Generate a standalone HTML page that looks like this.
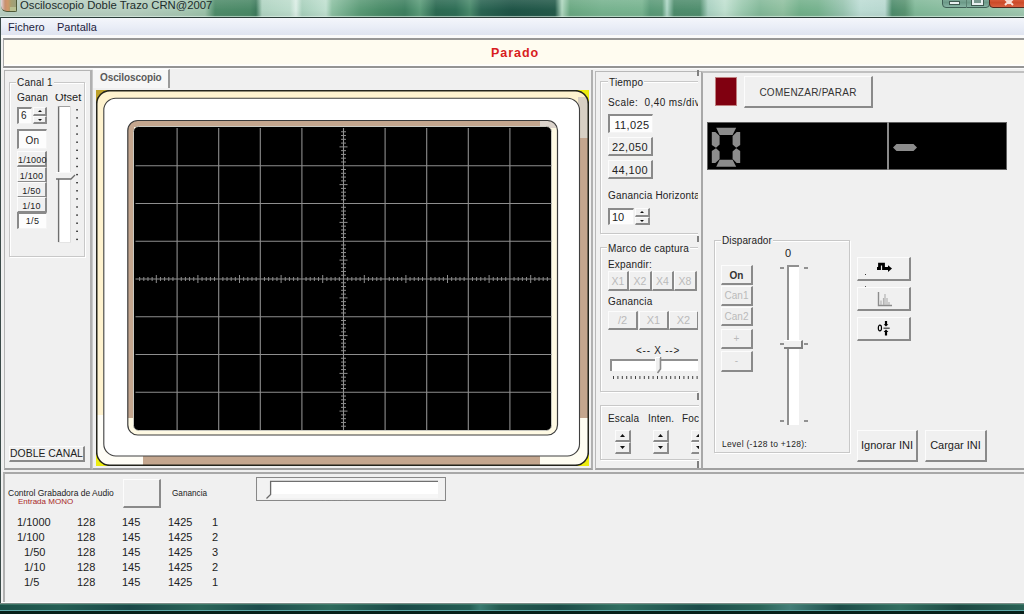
<!DOCTYPE html>
<html><head><meta charset="utf-8">
<style>
*{margin:0;padding:0;box-sizing:border-box}
html,body{width:1024px;height:614px;overflow:hidden;background:#f0f0f0;font-family:"Liberation Sans",sans-serif;color:#222}
.a{position:absolute}
.t{position:absolute;white-space:nowrap;font-size:11px;line-height:12px}
.btn{position:absolute;background:#f0f0f0;border-top:1px solid #fcfcfc;border-left:1px solid #fcfcfc;border-right:2px solid #8a8a8a;border-bottom:2px solid #8a8a8a;font-size:10px;text-align:center;color:#222;white-space:nowrap}
.prs{position:absolute;background:#fdfdfd;border-top:2px solid #8a8a8a;border-left:2px solid #8a8a8a;border-right:1px solid #f4f4f4;border-bottom:1px solid #f4f4f4;font-size:10px;text-align:center;color:#222;white-space:nowrap}
.dis{color:#bababa}
.grp{position:absolute;border:1px solid #c8c8c8;box-shadow:inset 1px 1px 0 #fff,1px 1px 0 #fff}
.pnl{position:absolute;border-top:2px solid #fff;border-left:2px solid #fff;border-right:2px solid #a8a8a8;border-bottom:2px solid #a8a8a8;box-shadow:inset -1px -1px 0 #d8d8d8}
.gt{position:absolute;background:#f0f0f0;padding:0 1px;font-size:11px;line-height:12px;white-space:nowrap;color:#222}
</style></head><body>

<!-- title bar -->
<div class="a" style="left:0;top:0;width:1024px;height:17px;background:linear-gradient(90deg,#b9cfc2 0px,#b6cebf 130px,#a8c8b4 180px,#9cc2aa 205px,#4f8c6a 215px,#4a8866 250px,#3e7a5c 256px,#b0d4c2 262px,#bcdccc 290px,#dceee6 296px,#a8d0bc 302px,#c0e0d0 326px,#8cc0a2 332px,#5a9a76 360px,#4a8c68 380px,#3e8060 405px,#5c9c7a 420px,#2c6a52 436px,#2e6e56 456px,#4a8a6c 470px,#2a6452 481px,#1e5446 512px,#245a4a 555px,#b0d8c0 562px,#6aa882 570px,#76b28e 602px,#78b490 642px,#5a9a78 650px,#5e9c7a 662px,#b0d8c8 667px,#4e8c6c 674px,#508e6e 700px,#a8d0c0 708px,#c0e0d0 725px,#9ccab0 742px,#82b898 760px,#90c0a0 783px,#72b08a 800px,#76b28e 818px,#98c4b0 843px,#bcdcd4 860px,#b8d8d0 885px,#4e8c6c 892px,#5a9472 905px,#80b898 915px,#a0c8b0 1024px)"></div>
<div class="a" style="left:0;top:0;width:1024px;height:17px;background:linear-gradient(rgba(255,255,255,0.12),rgba(255,255,255,0) 60%,rgba(0,0,0,0.04) 90%,rgba(255,255,255,0.25))"></div>
<div class="t" style="left:20px;top:-1px;font-size:11.3px;line-height:13px;color:#1c2c2c">Osciloscopio Doble Trazo CRN@2007</div>
<!-- app icon -->
<div class="a" style="left:1px;top:-1px;width:16px;height:13px;border-radius:0 0 2px 6px;background:linear-gradient(90deg,#e0d8e0 0px,#c89070 4px,#d09868 7px,#a8a070 10px,#98a080 16px);border-right:1px solid #505a38;border-bottom:1px solid #505a38"></div><div class="a" style="left:10px;top:7px;width:6px;height:4px;background:#b8c090"></div>
<!-- caption buttons -->
<div class="a" style="left:942px;top:-5px;width:48px;height:13px;border:1px solid #3e5e54;border-radius:4px;background:linear-gradient(#90b8a8,#6c9a88 60%,#88b4a4)"></div>
<div class="a" style="left:966px;top:0;width:1px;height:8px;background:#5a8070"></div>
<div class="a" style="left:949px;top:1px;width:11px;height:4px;background:#e8f0f0;border:1px solid #405a50"></div>
<div class="a" style="left:972px;top:-2px;width:11px;height:7px;border:2px solid #e8f0f0;background:#7a9a90;outline:1px solid #405a50"></div>
<div class="a" style="left:989px;top:-5px;width:40px;height:13px;border:1px solid #50281c;border-radius:4px;background:linear-gradient(#e87050,#cc4a28 60%,#d86040)"></div>
<svg class="a" style="left:1003px;top:0" width="14" height="6"><path d="M2 -1L6 3L10 -1M2 5L6 1L10 5" stroke="#f8e0d8" stroke-width="2" fill="none"/></svg>
<div class="a" style="left:0;top:16px;width:1024px;height:1px;background:rgba(220,240,230,0.5)"></div>
<div class="a" style="left:0;top:17px;width:1024px;height:1px;background:#2a3c38"></div>

<!-- menu bar -->
<div class="a" style="left:0;top:18px;width:1024px;height:17px;background:linear-gradient(#f4f6fb,#eaeef7 50%,#dfe4f0)"></div>
<div class="a" style="left:0;top:17px;width:1px;height:597px;background:#3a4a48"></div>
<div class="t" style="left:8px;top:21px;font-size:11px;color:#1e1e40">Fichero</div>
<div class="t" style="left:57px;top:21px;font-size:11px;color:#1e1e40">Pantalla</div>
<div class="a" style="left:1px;top:35px;width:1023px;height:4px;background:#fafafa"></div>

<!-- status panel -->
<div class="a" style="left:3px;top:38px;width:1021px;height:30px;background:linear-gradient(#fffcf0 0px,#fffcf0 24px,#ffffff 25px);border-top:2px solid #969696;border-left:1px solid #a8a8a8;border-bottom:2px solid #949494"></div><div class="a" style="left:3px;top:68px;width:1021px;height:1px;background:#fbfbfb"></div>
<div class="t" style="left:491px;top:46px;font-size:12.5px;letter-spacing:0.95px;line-height:14px;font-weight:bold;color:#d81c20">Parado</div>


<!-- main left panel -->
<div class="a" style="left:4px;top:70px;width:88px;height:400px;border-left:1px solid #b4b4b4;border-top:1px solid #b4b4b4;border-right:2px solid #b0b0b0;border-bottom:2px solid #a0a0a0"></div>
<div class="grp" style="left:9px;top:82px;width:76px;height:175px"></div>
<div class="gt" style="left:16px;top:77px;font-size:10px;letter-spacing:0.2px;">Canal 1</div>
<div class="t" style="left:17px;top:92px;font-size:10.2px;letter-spacing:0.1px">Ganan</div>
<div class="a" style="left:52px;top:94px;width:32px;height:8px;overflow:hidden"><div class="t" style="left:3px;top:-3px;">Ofset</div></div>
<!-- spin 6 -->
<div class="prs" style="left:17px;top:107px;width:15px;height:17px;text-align:left;font-size:10px;line-height:14px;padding-left:2px">6</div>
<div class="btn" style="left:33px;top:107px;width:14px;height:9px;font-size:6px;line-height:6px"><svg width="4" height="2" style="display:block;margin:auto;position:relative;top:2px"><path d="M0 2H4L2 0Z" fill="#111"/></svg></div>
<div class="btn" style="left:33px;top:116px;width:14px;height:8px;font-size:6px;line-height:6px"><svg width="4" height="2" style="display:block;margin:auto;position:relative;top:2px"><path d="M0 0H4L2 2Z" fill="#111"/></svg></div>
<!-- slider -->
<svg class="a" style="left:54px;top:100px" width="30" height="150">
<rect x="4.5" y="6" width="12" height="136.5" fill="#fff"/>
<path d="M4.6 6V142.3" stroke="#6e6e6e" stroke-width="1.4"/>
<path d="M4 6.5H16" stroke="#a0a0a0" stroke-width="1"/>
<path d="M16.5 6V142.5" stroke="#dedede" stroke-width="1"/>
<path d="M4 142.5H17" stroke="#e4e4e4" stroke-width="1"/>
<rect x="2" y="72" width="17" height="7" fill="#f0f0f0"/>
<path d="M2 72.5H17" stroke="#fafafa" stroke-width="1"/>
<path d="M2 79H17L21 75" stroke="#6a6a6a" stroke-width="1.3" fill="none"/>
<rect x="22.2" y="9.10" width="1.7" height="1.4" fill="#303030"/><rect x="22.2" y="17.20" width="1.7" height="1.4" fill="#303030"/><rect x="22.2" y="25.30" width="1.7" height="1.4" fill="#303030"/><rect x="22.2" y="33.40" width="1.7" height="1.4" fill="#303030"/><rect x="22.2" y="41.50" width="1.7" height="1.4" fill="#303030"/><rect x="22.2" y="49.60" width="1.7" height="1.4" fill="#303030"/><rect x="22.2" y="57.70" width="1.7" height="1.4" fill="#303030"/><rect x="22.2" y="65.80" width="1.7" height="1.4" fill="#303030"/><rect x="22.2" y="73.90" width="1.7" height="1.4" fill="#303030"/><rect x="22.2" y="82.00" width="1.7" height="1.4" fill="#303030"/><rect x="22.2" y="90.10" width="1.7" height="1.4" fill="#303030"/><rect x="22.2" y="98.20" width="1.7" height="1.4" fill="#303030"/><rect x="22.2" y="106.30" width="1.7" height="1.4" fill="#303030"/><rect x="22.2" y="114.40" width="1.7" height="1.4" fill="#303030"/><rect x="22.2" y="122.50" width="1.7" height="1.4" fill="#303030"/><rect x="22.2" y="130.60" width="1.7" height="1.4" fill="#303030"/><rect x="22.2" y="138.70" width="1.7" height="1.4" fill="#303030"/>
</svg>
<div class="prs" style="left:17px;top:129px;width:30px;height:20px;font-size:10px;line-height:19px;letter-spacing:0.3px">On</div>
<div class="btn" style="left:17px;top:151px;width:30px;height:16px;font-size:9px;line-height:16px;letter-spacing:0.2px">1/1000</div>
<div class="btn" style="left:17px;top:167px;width:30px;height:16px;font-size:9px;line-height:16px;letter-spacing:0.2px">1/100</div>
<div class="btn" style="left:17px;top:182px;width:30px;height:16px;font-size:9px;line-height:16px;letter-spacing:0.2px">1/50</div>
<div class="btn" style="left:17px;top:197px;width:30px;height:16px;font-size:9px;line-height:16px;letter-spacing:0.2px">1/10</div>
<div class="prs" style="left:17px;top:212px;width:30px;height:17px;font-size:9px;line-height:15px;letter-spacing:0.4px">1/5</div>
<div class="btn" style="left:9px;top:446px;width:76px;height:16px;font-size:10.4px;line-height:14px">DOBLE CANAL</div>

<!-- tab area panel -->
<div class="a" style="left:92px;top:70px;width:501px;height:400px;border-left:1px solid #c8c8c8;border-right:2px solid #b0b0b0;border-bottom:2px solid #a0a0a0"></div>
<div class="a" style="left:93px;top:69px;width:77px;height:19px;background:#f6f6f6;border-top:1px solid #fff;border-right:2px solid #9a9a9a"></div>
<div class="t" style="left:100px;top:72px;font-size:10px;font-weight:bold;letter-spacing:-0.1px;color:#5a5a5a">Osciloscopio</div>

<!-- TIEMPO column -->
<div class="a" style="left:595px;top:71px;width:106px;height:399px;border-left:1px solid #b8b8b8;border-top:1px solid #b8b8b8;border-bottom:2px solid #a4a4a4"></div>
<div class="a" style="left:697px;top:70px;width:1.5px;height:6px;background:#808080"></div>
<div class="a" style="left:697px;top:236px;width:1.5px;height:6px;background:#808080"></div>
<div class="a" style="left:697px;top:393px;width:1.5px;height:7px;background:#808080"></div>
<div class="a" style="left:697px;top:461px;width:1.5px;height:7px;background:#808080"></div>
<div class="a" style="left:600px;top:71px;width:98px;height:164px;overflow:hidden">
  <div class="grp" style="left:0;top:10px;width:120px;height:153px"></div>
  <div class="gt" style="left:8px;top:6px;font-size:10px;letter-spacing:0.2px;">Tiempo</div>
  <div class="t" style="left:8px;top:26px;font-size:10px;letter-spacing:0.4px;">Scale:&nbsp; 0,40 ms/div</div>
  <div class="prs" style="left:8px;top:43px;width:45px;height:19px;line-height:19px;font-size:11px;letter-spacing:0.4px;padding-left:2px">11,025</div>
  <div class="btn" style="left:8px;top:66px;width:45px;height:19px;line-height:19px;font-size:11px;letter-spacing:0.4px">22,050</div>
  <div class="btn" style="left:8px;top:89px;width:45px;height:19px;line-height:19px;font-size:11px;letter-spacing:0.4px">44,100</div>
  <div class="t" style="left:8px;top:119px;font-size:10px;letter-spacing:0.2px;">Ganancia Horizontal</div>
  <div class="prs" style="left:8px;top:137px;width:26px;height:17px;text-align:left;padding-left:2px;font-size:11px;line-height:14px">10</div>
  <div class="btn" style="left:35px;top:137px;width:15px;height:9px;font-size:6px;line-height:6px"><svg width="4" height="2" style="display:block;margin:auto;position:relative;top:2px"><path d="M0 2H4L2 0Z" fill="#111"/></svg></div>
  <div class="btn" style="left:35px;top:146px;width:15px;height:8px;font-size:6px;line-height:6px"><svg width="4" height="2" style="display:block;margin:auto;position:relative;top:2px"><path d="M0 0H4L2 2Z" fill="#111"/></svg></div>
</div>
<div class="a" style="left:600px;top:235px;width:98px;height:158px;overflow:hidden">
  <div class="grp" style="left:0;top:12px;width:120px;height:145px"></div>
  <div class="gt" style="left:7px;top:8px;font-size:10px;letter-spacing:0.2px;">Marco de captura</div>
  <div class="t" style="left:8px;top:24px;font-size:10px;letter-spacing:0.2px;">Expandir:</div>
  <div class="btn dis" style="left:8px;top:36px;width:21px;height:20px;line-height:18px;font-size:10.5px">X1</div>
  <div class="btn dis" style="left:29px;top:36px;width:23px;height:20px;line-height:18px;font-size:10.5px">X2</div>
  <div class="btn dis" style="left:52px;top:36px;width:22px;height:20px;line-height:18px;font-size:10.5px">X4</div>
  <div class="btn dis" style="left:74px;top:36px;width:23px;height:20px;line-height:18px;font-size:10.5px">X8</div>
  <div class="t" style="left:8px;top:61px;font-size:10px;letter-spacing:0.2px;">Ganancia</div>
  <div class="btn dis" style="left:8px;top:76px;width:30px;height:19px;line-height:17px;font-size:11px">/2</div>
  <div class="btn dis" style="left:39px;top:76px;width:30px;height:19px;line-height:17px;font-size:11px">X1</div>
  <div class="btn dis" style="left:69px;top:76px;width:30px;height:19px;line-height:17px;font-size:11px">X2</div>
  <div class="t" style="left:36px;top:110px;font-size:10px;letter-spacing:0.75px">&lt;-- X --&gt;</div>
  <div class="a" style="left:10px;top:124px;width:95px;height:12px;background:#fff;border-top:2px solid #909090;border-left:2px solid #909090"></div>
  <svg class="a" style="left:54px;top:121px" width="10" height="18"><path d="M1.5 1.5H6.5V13L4 16.5H1.5Z" fill="#f0f0f0"/><path d="M6.5 1V13L3.5 17" stroke="#8a8a8a" stroke-width="1.6" fill="none"/><path d="M1.5 15V1.5H6" stroke="#fff" stroke-width="1" fill="none"/></svg>
  <svg class="a" style="left:12px;top:140px" width="90" height="6"><rect x="1.0" y="1" width="1" height="3" fill="#404040"/><rect x="5.4" y="1" width="1" height="3" fill="#404040"/><rect x="9.8" y="1" width="1" height="3" fill="#404040"/><rect x="14.2" y="1" width="1" height="3" fill="#404040"/><rect x="18.6" y="1" width="1" height="3" fill="#404040"/><rect x="23.0" y="1" width="1" height="3" fill="#404040"/><rect x="27.4" y="1" width="1" height="3" fill="#404040"/><rect x="31.8" y="1" width="1" height="3" fill="#404040"/><rect x="36.2" y="1" width="1" height="3" fill="#404040"/><rect x="40.6" y="1" width="1" height="3" fill="#404040"/><rect x="45.0" y="1" width="1" height="3" fill="#404040"/><rect x="49.4" y="1" width="1" height="3" fill="#404040"/><rect x="53.8" y="1" width="1" height="3" fill="#404040"/><rect x="58.2" y="1" width="1" height="3" fill="#404040"/><rect x="62.6" y="1" width="1" height="3" fill="#404040"/><rect x="67.0" y="1" width="1" height="3" fill="#404040"/><rect x="71.4" y="1" width="1" height="3" fill="#404040"/><rect x="75.8" y="1" width="1" height="3" fill="#404040"/><rect x="80.2" y="1" width="1" height="3" fill="#404040"/><rect x="84.6" y="1" width="1" height="3" fill="#404040"/><rect x="89.0" y="1" width="1" height="3" fill="#404040"/></svg>
</div>
<div class="a" style="left:600px;top:405px;width:99px;height:56px;overflow:hidden">
  <div class="grp" style="left:0;top:0;width:120px;height:55px"></div>
  <div class="t" style="left:8px;top:8px;font-size:10px;letter-spacing:0.2px;">Escala</div>
  <div class="t" style="left:48px;top:8px;font-size:10px;letter-spacing:0.2px;">Inten.</div>
  <div class="t" style="left:82px;top:8px;font-size:10px;letter-spacing:0.2px;">Foc</div>
  <div class="btn" style="left:15px;top:25px;width:16px;height:12px;font-size:7px;line-height:9px"><svg width="5" height="3" style="display:block;margin:auto;position:relative;top:3px"><path d="M0 3H5L2.5 0Z" fill="#111"/></svg></div>
  <div class="btn" style="left:15px;top:37px;width:16px;height:12px;font-size:7px;line-height:9px"><svg width="5" height="3" style="display:block;margin:auto;position:relative;top:3px"><path d="M0 0H5L2.5 3Z" fill="#111"/></svg></div>
  <div class="btn" style="left:53px;top:25px;width:16px;height:12px;font-size:7px;line-height:9px"><svg width="5" height="3" style="display:block;margin:auto;position:relative;top:3px"><path d="M0 3H5L2.5 0Z" fill="#111"/></svg></div>
  <div class="btn" style="left:53px;top:37px;width:16px;height:12px;font-size:7px;line-height:9px"><svg width="5" height="3" style="display:block;margin:auto;position:relative;top:3px"><path d="M0 0H5L2.5 3Z" fill="#111"/></svg></div>
  <div class="btn" style="left:91px;top:25px;width:16px;height:12px;font-size:7px;line-height:9px"><svg width="5" height="3" style="display:block;margin:auto;position:relative;top:3px"><path d="M0 3H5L2.5 0Z" fill="#111"/></svg></div>
  <div class="btn" style="left:91px;top:37px;width:16px;height:12px;font-size:7px;line-height:9px"><svg width="5" height="3" style="display:block;margin:auto;position:relative;top:3px"><path d="M0 0H5L2.5 3Z" fill="#111"/></svg></div>
</div>

<!-- RIGHT panel -->
<div class="a" style="left:701px;top:71px;width:323px;height:399px;border-left:2px solid #a8a8a8;border-top:2px solid #c0c0c0;border-bottom:2px solid #a0a0a0"></div>
<div class="a" style="left:715px;top:77px;width:22px;height:29px;background:#800010;border:1px solid #c08080"></div>
<div class="btn" style="left:744px;top:76px;width:129px;height:32px;font-size:10px;letter-spacing:0.25px;line-height:32px;color:#333">COMENZAR/PARAR</div>
<div class="a" style="left:707px;top:122px;width:300px;height:48px;background:#000;border:1px solid #606060"></div>
<div class="a" style="left:887px;top:122px;width:2px;height:48px;background:#8a8a8a"></div>
<svg class="a" style="left:707px;top:122px" width="300" height="48"><polygon points="9.2,5.8 29.2,5.8 25.6,13.0 12.6,13.0" fill="#8c8c8c"/><polygon points="9.2,44.8 29.2,44.8 25.6,37.8 12.6,37.8" fill="#8c8c8c"/><polygon points="4.8,10.0 8.4,10.0 12.6,14.0 12.6,22.4 9.0,25.8 4.8,23.0" fill="#8c8c8c"/><polygon points="4.8,41.0 8.4,41.0 12.6,37.0 12.6,29.4 9.0,26.2 4.8,29.0" fill="#8c8c8c"/><polygon points="33.2,10.0 29.6,10.0 25.6,14.0 25.6,22.4 29.2,25.8 33.2,23.0" fill="#8c8c8c"/><polygon points="33.2,41.0 29.6,41.0 25.6,37.0 25.6,29.4 29.2,26.2 33.2,29.0" fill="#8c8c8c"/><polygon points="186.0,25.5 189.5,22.0 206.5,22.0 210.0,25.5 206.5,29.0 189.5,29.0" fill="#8c8c8c"/></svg>
<div class="grp" style="left:714px;top:240px;width:136px;height:213px"></div>
<div class="gt" style="left:721px;top:235px;font-size:10px;letter-spacing:0.1px">Disparador</div>
<div class="t" style="left:785px;top:247px;">0</div>
<div class="btn" style="left:721px;top:265px;width:32px;height:20px;line-height:20px;font-size:10px;font-weight:bold;color:#333">On</div>
<div class="btn dis" style="left:721px;top:286px;width:32px;height:20px;line-height:17px;font-size:10px">Can1</div>
<div class="btn dis" style="left:721px;top:307px;width:32px;height:19px;line-height:17px;font-size:10px">Can2</div>
<div class="btn dis" style="left:721px;top:329px;width:32px;height:20px;line-height:17px;font-size:10px">+</div>
<div class="btn dis" style="left:721px;top:351px;width:32px;height:21px;line-height:17px;font-size:10px">-</div>
<div class="a" style="left:787px;top:265px;width:12px;height:160px;background:#fff;border-left:2px solid #909090;border-top:2px solid #909090"></div>
<div class="a" style="left:784px;top:340px;width:19px;height:9px;background:#f0f0f0;border-top:1px solid #fff;border-right:2px solid #808080;border-bottom:2px solid #808080"></div>
<div class="t" style="left:722px;top:438px;font-size:8.5px;letter-spacing:0.3px">Level (-128 to +128):</div><svg class="a" style="left:778px;top:262px" width="32" height="166"><path d="M2 6H6M26 6H30M2 82H6M26 82H30M2 159H6M26 159H30" stroke="#333" stroke-width="1"/></svg>
<div class="btn" style="left:857px;top:257px;width:54px;height:24px"></div><svg class="a" style="left:870px;top:258px" width="30" height="20"><path d="M7 10.5H9.5V6.2H13.5V10.5H19" stroke="#000" stroke-width="2.8" fill="none" stroke-linejoin="miter"/><path d="M18 7.3L22 10.6L18 14Z" fill="#000"/></svg><div class="a" style="left:865px;top:274px;width:1px;height:1px;background:#333"></div><div class="a" style="left:865px;top:286px;width:1px;height:1px;background:#555"></div>
<div class="btn" style="left:857px;top:287px;width:54px;height:24px"></div><svg class="a" style="left:870px;top:288px" width="30" height="22"><path d="M8.5 4V17.5H22" stroke="#8c8c8c" stroke-width="1.4" fill="none"/><path d="M11 17V12.5M13.5 17V10M15 17V6M17 17V10M19 17V14" stroke="#b4b4b4" stroke-width="1.2"/></svg>
<div class="btn" style="left:857px;top:317px;width:54px;height:24px"></div><svg class="a" style="left:870px;top:317px" width="30" height="22"><ellipse cx="9.9" cy="11" rx="1.6" ry="2.8" stroke="#000" stroke-width="1.2" fill="none"/><path d="M16 4V8" stroke="#000" stroke-width="2.2"/><path d="M13.6 7.3H18.4L16 9.6Z" fill="#000"/><path d="M13.5 11.2H19.7" stroke="#444" stroke-width="1.3"/><path d="M16 14V18.5" stroke="#000" stroke-width="2.2"/><path d="M13.6 15H18.4L16 12.6Z" fill="#000"/></svg>
<div class="btn" style="left:857px;top:430px;width:61px;height:32px;font-size:11px;line-height:29px">Ignorar INI</div>
<div class="btn" style="left:925px;top:430px;width:62px;height:32px;font-size:11px;line-height:29px">Cargar INI</div>

<!-- BOTTOM panel -->
<div class="a" style="left:3px;top:472px;width:1021px;height:130px;border-left:2px solid #b0b0b0;border-top:2px solid #a8a8a8"></div>
<div class="t" style="left:8px;top:489px;font-size:8.5px;line-height:9px">Control Grabadora de Audio</div>
<div class="t" style="left:18px;top:497px;font-size:8px;line-height:9px;color:#a82828">Entrada MONO</div>
<div class="btn" style="left:123px;top:479px;width:38px;height:29px"></div>
<div class="t" style="left:172px;top:489px;font-size:8.2px;line-height:9px">Ganancia</div>
<svg class="a" style="left:250px;top:472px" width="200" height="34">
<rect x="6.5" y="5.5" width="189" height="23" fill="none" stroke="#202020" stroke-width="1" stroke-dasharray="1 1"/>
<rect x="8" y="7" width="186" height="20" fill="#f2f2f2"/>
<rect x="21" y="10" width="167" height="12" fill="#fff"/>
<rect x="21" y="22" width="167" height="4" fill="#f6f6f6"/>
<path d="M20 9.3H188" stroke="#707070" stroke-width="1.3"/>
<path d="M20.6 9V22.5L16.5 26.5" stroke="#6a6a6a" stroke-width="1.3" fill="none"/>
</svg>

<div class="a" style="left:0;top:603px;width:1024px;height:11px;background:linear-gradient(90deg,#1c5048 0px,#245e54 60px,#1a4848 130px,#2a6458 200px,#1c4c4c 260px,#2e6a5c 330px,#1a4a48 400px,#245e54 470px,#3a7a70 480px,#245a50 500px,#1c4c48 560px,#306e60 620px,#1c4c4a 700px,#2a6458 760px,#447e78 790px,#1c4c48 840px,#326e60 900px,#1c4842 960px,#2a6256 1024px)"></div>
<div class="a" style="left:1px;top:602px;width:1023px;height:1px;background:#fafafa"></div>
<div class="a" style="left:0;top:603px;width:1024px;height:1px;background:#7a8a86"></div>
<div class="a" style="left:0;top:604px;width:1024px;height:1px;background:rgba(80,140,120,0.6)"></div>
<div class="a" style="left:0;top:610px;width:1024px;height:1px;background:#5ea8a8"></div>
<div class="a" style="left:0;top:611px;width:1024px;height:3px;background:#08201a"></div>
<div class="t" style="left:17px;top:516px;font-size:11px">1/1000</div><div class="t" style="left:77px;top:516px;font-size:11px">128</div><div class="t" style="left:122px;top:516px;font-size:11px">145</div><div class="t" style="left:168px;top:516px;font-size:11px">1425</div><div class="t" style="left:212px;top:516px;font-size:11px">1</div>
<div class="t" style="left:17px;top:531px;font-size:11px">1/100</div><div class="t" style="left:77px;top:531px;font-size:11px">128</div><div class="t" style="left:122px;top:531px;font-size:11px">145</div><div class="t" style="left:168px;top:531px;font-size:11px">1425</div><div class="t" style="left:212px;top:531px;font-size:11px">2</div>
<div class="t" style="left:24px;top:546px;font-size:11px">1/50</div><div class="t" style="left:77px;top:546px;font-size:11px">128</div><div class="t" style="left:122px;top:546px;font-size:11px">145</div><div class="t" style="left:168px;top:546px;font-size:11px">1425</div><div class="t" style="left:212px;top:546px;font-size:11px">3</div>
<div class="t" style="left:24px;top:561px;font-size:11px">1/10</div><div class="t" style="left:77px;top:561px;font-size:11px">128</div><div class="t" style="left:122px;top:561px;font-size:11px">145</div><div class="t" style="left:168px;top:561px;font-size:11px">1425</div><div class="t" style="left:212px;top:561px;font-size:11px">2</div>
<div class="t" style="left:24px;top:576px;font-size:11px">1/5</div><div class="t" style="left:77px;top:576px;font-size:11px">128</div><div class="t" style="left:122px;top:576px;font-size:11px">145</div><div class="t" style="left:168px;top:576px;font-size:11px">1425</div><div class="t" style="left:212px;top:576px;font-size:11px">1</div>

<!-- SCOPE -->
<svg class="a" style="left:96px;top:90px" width="493" height="376" viewBox="0 0 493 376">
<rect x="0" y="0" width="493" height="376" fill="#ecec10"/>
<path d="M0 0 H16 V16 H0 Z" fill="#bca02a"/>
<rect x="0.7000000000000028" y="0.7000000000000028" width="491.59999999999997" height="374.6" rx="13" fill="#fff3cf"/>
<clipPath id="oc"><rect x="0.7000000000000028" y="0.7000000000000028" width="491.59999999999997" height="374.6" rx="13"/></clipPath>
<g clip-path="url(#oc)">
<rect x="482" y="7" width="12" height="41" fill="#d8d0c4"/>
<rect x="482" y="48" width="12" height="280" fill="#c4a68e"/>
<rect x="47" y="362" width="397" height="14" fill="#c4a68e"/>
<rect x="1" y="325" width="8" height="50" fill="#fffef8"/>
<rect x="444" y="362" width="50" height="14" fill="#fffdf2"/>
<rect x="482" y="328" width="12" height="50" fill="#fffdf2"/>
<rect x="1" y="362" width="46" height="14" fill="#fffdf6"/>
</g>
<rect x="0.7000000000000028" y="0.7000000000000028" width="491.59999999999997" height="374.6" rx="13" fill="none" stroke="#24241c" stroke-width="1.6"/>
<rect x="7.799999999999997" y="8.200000000000003" width="475.7" height="357.8" rx="12" fill="#ffffff" stroke="#404040" stroke-width="1.1"/>
<rect x="31.799999999999997" y="30.5" width="429.7" height="314.5" rx="10" fill="#fffae4"/>
<clipPath id="tc"><rect x="31.799999999999997" y="30.5" width="429.7" height="314.5" rx="10"/></clipPath>
<g clip-path="url(#tc)">
<rect x="31" y="30" width="413" height="7" fill="#c4a68e"/>
<rect x="444" y="30" width="20" height="8" fill="#dcd4cc"/>
<rect x="31" y="30" width="7" height="298" fill="#c4a68e"/>
</g>
<rect x="31.799999999999997" y="30.5" width="429.7" height="314.5" rx="10" fill="none" stroke="#3c3c3c" stroke-width="1.2"/>
<rect x="37.5" y="36.5" width="418.0" height="304.0" rx="5" fill="#000" stroke="#c8c8c0" stroke-width="1"/>
<line x1="81.10" y1="38.00" x2="81.10" y2="340.00" stroke="#8e8e8e" stroke-width="1.1"/>
<line x1="122.70" y1="38.00" x2="122.70" y2="340.00" stroke="#8e8e8e" stroke-width="1.1"/>
<line x1="164.30" y1="38.00" x2="164.30" y2="340.00" stroke="#8e8e8e" stroke-width="1.1"/>
<line x1="205.90" y1="38.00" x2="205.90" y2="340.00" stroke="#8e8e8e" stroke-width="1.1"/>
<line x1="247.50" y1="38.00" x2="247.50" y2="340.00" stroke="#8e8e8e" stroke-width="1.1"/>
<line x1="289.10" y1="38.00" x2="289.10" y2="340.00" stroke="#8e8e8e" stroke-width="1.1"/>
<line x1="330.70" y1="38.00" x2="330.70" y2="340.00" stroke="#8e8e8e" stroke-width="1.1"/>
<line x1="372.30" y1="38.00" x2="372.30" y2="340.00" stroke="#8e8e8e" stroke-width="1.1"/>
<line x1="413.90" y1="38.00" x2="413.90" y2="340.00" stroke="#8e8e8e" stroke-width="1.1"/>
<line x1="39.50" y1="75.75" x2="455.50" y2="75.75" stroke="#8e8e8e" stroke-width="1.1"/>
<line x1="39.50" y1="113.50" x2="455.50" y2="113.50" stroke="#8e8e8e" stroke-width="1.1"/>
<line x1="39.50" y1="151.25" x2="455.50" y2="151.25" stroke="#8e8e8e" stroke-width="1.1"/>
<line x1="39.50" y1="189.00" x2="455.50" y2="189.00" stroke="#8e8e8e" stroke-width="1.1"/>
<line x1="39.50" y1="226.75" x2="455.50" y2="226.75" stroke="#8e8e8e" stroke-width="1.1"/>
<line x1="39.50" y1="264.50" x2="455.50" y2="264.50" stroke="#8e8e8e" stroke-width="1.1"/>
<line x1="39.50" y1="302.25" x2="455.50" y2="302.25" stroke="#8e8e8e" stroke-width="1.1"/>
<path d="M43.66 187.00V191.00M47.82 187.00V191.00M51.98 187.00V191.00M56.14 187.00V191.00M60.30 185.00V193.00M64.46 187.00V191.00M68.62 187.00V191.00M72.78 187.00V191.00M76.94 187.00V191.00M85.26 187.00V191.00M89.42 187.00V191.00M93.58 187.00V191.00M97.74 187.00V191.00M101.90 185.00V193.00M106.06 187.00V191.00M110.22 187.00V191.00M114.38 187.00V191.00M118.54 187.00V191.00M126.86 187.00V191.00M131.02 187.00V191.00M135.18 187.00V191.00M139.34 187.00V191.00M143.50 185.00V193.00M147.66 187.00V191.00M151.82 187.00V191.00M155.98 187.00V191.00M160.14 187.00V191.00M168.46 187.00V191.00M172.62 187.00V191.00M176.78 187.00V191.00M180.94 187.00V191.00M185.10 185.00V193.00M189.26 187.00V191.00M193.42 187.00V191.00M197.58 187.00V191.00M201.74 187.00V191.00M210.06 187.00V191.00M214.22 187.00V191.00M218.38 187.00V191.00M222.54 187.00V191.00M226.70 185.00V193.00M230.86 187.00V191.00M235.02 187.00V191.00M239.18 187.00V191.00M243.34 187.00V191.00M251.66 187.00V191.00M255.82 187.00V191.00M259.98 187.00V191.00M264.14 187.00V191.00M268.30 185.00V193.00M272.46 187.00V191.00M276.62 187.00V191.00M280.78 187.00V191.00M284.94 187.00V191.00M293.26 187.00V191.00M297.42 187.00V191.00M301.58 187.00V191.00M305.74 187.00V191.00M309.90 185.00V193.00M314.06 187.00V191.00M318.22 187.00V191.00M322.38 187.00V191.00M326.54 187.00V191.00M334.86 187.00V191.00M339.02 187.00V191.00M343.18 187.00V191.00M347.34 187.00V191.00M351.50 185.00V193.00M355.66 187.00V191.00M359.82 187.00V191.00M363.98 187.00V191.00M368.14 187.00V191.00M376.46 187.00V191.00M380.62 187.00V191.00M384.78 187.00V191.00M388.94 187.00V191.00M393.10 185.00V193.00M397.26 187.00V191.00M401.42 187.00V191.00M405.58 187.00V191.00M409.74 187.00V191.00M418.06 187.00V191.00M422.22 187.00V191.00M426.38 187.00V191.00M430.54 187.00V191.00M434.70 185.00V193.00M438.86 187.00V191.00M443.02 187.00V191.00M447.18 187.00V191.00M451.34 187.00V191.00M245.00 41.78H250.00M245.00 45.55H250.00M245.00 49.32H250.00M245.00 53.10H250.00M243.50 56.88H251.50M245.00 60.65H250.00M245.00 64.43H250.00M245.00 68.20H250.00M245.00 71.97H250.00M245.00 79.53H250.00M245.00 83.30H250.00M245.00 87.07H250.00M245.00 90.85H250.00M243.50 94.62H251.50M245.00 98.40H250.00M245.00 102.18H250.00M245.00 105.95H250.00M245.00 109.72H250.00M245.00 117.28H250.00M245.00 121.05H250.00M245.00 124.82H250.00M245.00 128.60H250.00M243.50 132.38H251.50M245.00 136.15H250.00M245.00 139.93H250.00M245.00 143.70H250.00M245.00 147.47H250.00M245.00 155.03H250.00M245.00 158.80H250.00M245.00 162.57H250.00M245.00 166.35H250.00M243.50 170.12H251.50M245.00 173.90H250.00M245.00 177.68H250.00M245.00 181.45H250.00M245.00 185.23H250.00M245.00 192.77H250.00M245.00 196.55H250.00M245.00 200.32H250.00M245.00 204.10H250.00M243.50 207.88H251.50M245.00 211.65H250.00M245.00 215.43H250.00M245.00 219.20H250.00M245.00 222.98H250.00M245.00 230.52H250.00M245.00 234.30H250.00M245.00 238.07H250.00M245.00 241.85H250.00M243.50 245.62H251.50M245.00 249.40H250.00M245.00 253.18H250.00M245.00 256.95H250.00M245.00 260.73H250.00M245.00 268.27H250.00M245.00 272.05H250.00M245.00 275.82H250.00M245.00 279.60H250.00M243.50 283.38H251.50M245.00 287.15H250.00M245.00 290.93H250.00M245.00 294.70H250.00M245.00 298.48H250.00M245.00 306.02H250.00M245.00 309.80H250.00M245.00 313.57H250.00M245.00 317.35H250.00M243.50 321.12H251.50M245.00 324.90H250.00M245.00 328.68H250.00M245.00 332.45H250.00M245.00 336.23H250.00" stroke="#8e8e8e" stroke-width="1" fill="none"/>
</svg>
<!-- /SCOPE -->
</body></html>
